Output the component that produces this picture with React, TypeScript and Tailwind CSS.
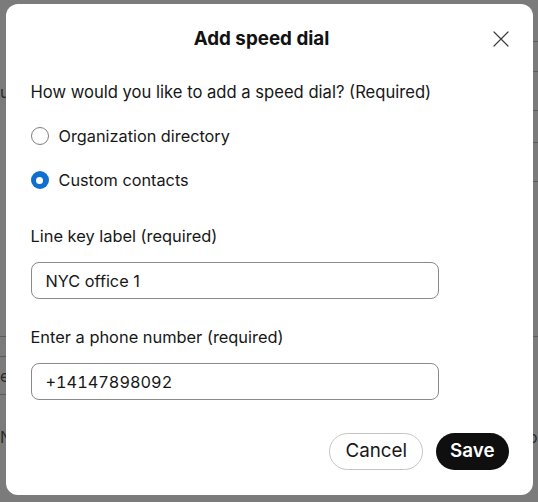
import { useState } from 'react';

function CloseIcon() {
  return (
    <svg className="h-4 w-4 text-[#3d3d3d]" viewBox="0 0 16 16" fill="none" stroke="currentColor" strokeWidth={1.2} strokeLinecap="round">
      <path d="M1 1l14 14M15 1L1 15" />
    </svg>
  );
}

function Radio({ checked, label, onSelect }: { checked: boolean; label: string; onSelect: () => void }) {
  return (
    <button type="button" onClick={onSelect} className="flex h-6 items-center gap-[10px] text-left">
      {checked ? (
        <span className="flex h-[18px] w-[18px] items-center justify-center rounded-full bg-[#1170cf]">
          <span className="h-[7px] w-[7px] rounded-full bg-white" />
        </span>
      ) : (
        <span className="h-[18px] w-[18px] rounded-full border border-[#7f7f7f] bg-white" />
      )}
      <span className="text-[16.3px] leading-6 text-[#171717]">{label}</span>
    </button>
  );
}

export default function App() {
  const [source, setSource] = useState<'org' | 'custom'>('custom');

  return (
    <div className="relative h-[502px] w-full overflow-hidden bg-[#7b7b7b] font-['Inter','Noto_Sans',sans-serif]">
      {/* page behind the dialog */}
      <div className="flex h-full text-[16px] leading-6 text-[#2a2a2a]">
        <div className="w-[20px]">
          <div className="h-[80px]" />
          <div className="h-[24px]">u</div>
          <div className="h-[233px] border-b border-[#5c5c5c]" />
          <div className="h-[20px] border-b border-[#5c5c5c]" />
          <div className="flex h-[38px] items-center border-b border-[#5c5c5c]">ea</div>
          <div className="h-[30px]" />
          <div>N</div>
        </div>
        <div className="flex-1" />
        <div className="w-[20px]">
          <div className="h-[42px] border-b border-[#5c5c5c]" />
          <div className="h-[30px] border-b border-[#5c5c5c]" />
          <div className="h-[39px] border-b border-[#5c5c5c]" />
          <div className="h-[32px] border-b border-[#5c5c5c]" />
          <div className="h-[39px] border-b border-[#5c5c5c]" />
          <div className="h-[155px] border-b border-[#5c5c5c]" />
          <div className="h-[88px]" />
          <div className="pl-[10px]">o</div>
        </div>
      </div>

      <div className="absolute inset-0 flex justify-center pt-1">
        <div className="h-[491px] w-[527px] rounded-xl bg-white pb-[25px] pl-[25px] pr-[24px] pt-[21px] text-[#171717]">
          <div className="flex h-7 items-center">
            <h2 className="flex-1 text-center text-[18.8px] font-bold leading-7 text-[#121212]">Add speed dial</h2>
            <button type="button" aria-label="Close" className="flex h-4 w-4 items-center justify-center">
              <CloseIcon />
            </button>
          </div>

          <p className="mt-[27px] text-[16.6px] leading-6">How would you like to add a speed dial? (Required)</p>

          <div className="mt-5 flex flex-col gap-5">
            <Radio checked={source === 'org'} label="Organization directory" onSelect={() => setSource('org')} />
            <Radio checked={source === 'custom'} label="Custom contacts" onSelect={() => setSource('custom')} />
          </div>

          <label className="mt-8 block text-[16.4px] leading-6">Line key label (required)</label>
          <input
            defaultValue="NYC office 1"
            className="mt-[14px] block h-[37px] w-[408px] rounded-lg border border-[#8a8a8a] px-[14px] text-[16.3px] text-[#171717] outline-none"
          />

          <label className="mt-[26px] block text-[16.4px] leading-6">Enter a phone number (required)</label>
          <input
            defaultValue="+14147898092"
            className="mt-[14px] block h-[37px] w-[408px] rounded-lg border border-[#8a8a8a] px-[14px] text-[16.3px] tabular-nums text-[#171717] outline-none"
          />

          <div className="mt-[33px] flex justify-end gap-[13px]">
            <button type="button" className="h-[37px] rounded-full border border-[#c4c4c4] bg-white px-[15px] text-[18.8px] text-[#171717]">
              Cancel
            </button>
            <button type="button" className="h-[37px] rounded-full bg-[#0f0f0f] px-[14px] text-[18.8px] font-semibold text-white">
              Save
            </button>
          </div>
        </div>
      </div>
    </div>
  );
}
